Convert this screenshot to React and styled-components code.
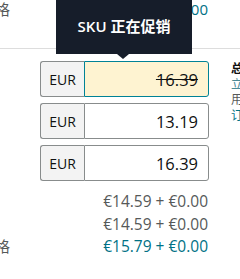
import React from "react";
import styled, { createGlobalStyle } from "styled-components";

const Global = createGlobalStyle`
  html, body { margin: 0; padding: 0; background: #fff; overflow: hidden; }
  body { font-family: "Open Sans", "Noto Sans CJK SC", sans-serif; color: #0f1111; }
`;

const Page = styled.div`
  width: 320px;
  margin-left: -20px;
`;

const TopRow = styled.div`
  display: grid;
  grid-template-columns: 60px 169px;
  height: 18px;
  line-height: 18px;
  font-size: 15px;
`;

const Label = styled.div`
  color: #565959;
  font-size: 15px;
  white-space: nowrap;
`;

const Divider = styled.div`
  height: 1px;
  background: #dddddd;
  margin-top: 30px;
`;

const Section = styled.div`
  display: grid;
  grid-template-columns: 60px 169px 1fr;
  margin-top: 12px;
`;

const InputsCol = styled.div`
  display: flex;
  flex-direction: column;
  gap: 6px;
`;

const Group = styled.div`
  position: relative;
  display: flex;
  height: 36px;
`;

const Prefix = styled.div`
  width: 44px;
  box-sizing: border-box;
  display: flex;
  align-items: center;
  justify-content: center;
  background: #f3f3f3;
  border: 1px solid #888c8c;
  border-right: none;
  border-radius: 3px 0 0 3px;
  font-size: 14px;
  color: #0f1111;
`;

const Field = styled.div`
  flex: 1;
  box-sizing: border-box;
  display: flex;
  align-items: center;
  justify-content: flex-end;
  padding-right: 10px;
  border: 1px solid ${(p) => (p.$active ? "#008296" : "#888c8c")};
  background: ${(p) => (p.$active ? "#fef3d1" : "#fff")};
  border-radius: 0 3px 3px 0;
  font-size: 16.5px;
  color: #0f1111;
  text-decoration: ${(p) => (p.$strike ? "line-through" : "none")};
`;

const Tooltip = styled.div`
  position: absolute;
  left: 16px;
  bottom: 43px;
  width: 136px;
  height: 58px;
  background: #161d2a;
  color: #fff;
  display: flex;
  align-items: center;
  justify-content: center;
  font-size: 15px;
  font-weight: 600;
  white-space: nowrap;
  &::after {
    content: "";
    position: absolute;
    left: 61px;
    bottom: -5px;
    border-left: 6px solid transparent;
    border-right: 6px solid transparent;
    border-top: 5px solid #161d2a;
  }
`;

const Prices = styled.div`
  grid-column: 1 / span 2;
  display: grid;
  grid-template-columns: 60px 169px;
  margin-top: 9px;
  line-height: 22.5px;
  font-size: 15.5px;
`;

const Price = styled.div`
  text-align: right;
  padding-right: 1px;
  white-space: nowrap;
  color: ${(p) => (p.$teal ? "#007185" : "#565959")};
`;

const RightCol = styled.div`
  padding-left: 22px;
  display: flex;
  flex-direction: column;
  font-size: 12px;
  line-height: 15.5px;
  white-space: nowrap;
`;

const Side = styled.div`
  color: ${(p) => p.$c || "#565959"};
  font-weight: ${(p) => (p.$bold ? 700 : 400)};
`;

export default function App() {
  return (
    <>
      <Global />
      <Page>
        <TopRow>
          <Label>价格</Label>
          <Price $teal>€16.39 + €0.00</Price>
        </TopRow>
        <Divider />
        <Section>
          <div />
          <InputsCol>
            <Group>
              <Tooltip>SKU 正在促销</Tooltip>
              <Prefix>EUR</Prefix>
              <Field $active $strike>16.39</Field>
            </Group>
            <Group>
              <Prefix>EUR</Prefix>
              <Field>13.19</Field>
            </Group>
            <Group>
              <Prefix>EUR</Prefix>
              <Field>16.39</Field>
            </Group>
          </InputsCol>
          <RightCol>
            <Side $bold $c="#0f1111">总计</Side>
            <Side $c="#4b8a96">立即</Side>
            <Side $c="#565959">用户</Side>
            <Side $c="#007185">订单</Side>
          </RightCol>
          <Prices>
            <div />
            <Price>€14.59 + €0.00</Price>
            <div />
            <Price>€14.59 + €0.00</Price>
            <Label>价格</Label>
            <Price $teal>€15.79 + €0.00</Price>
          </Prices>
        </Section>
      </Page>
    </>
  );
}
